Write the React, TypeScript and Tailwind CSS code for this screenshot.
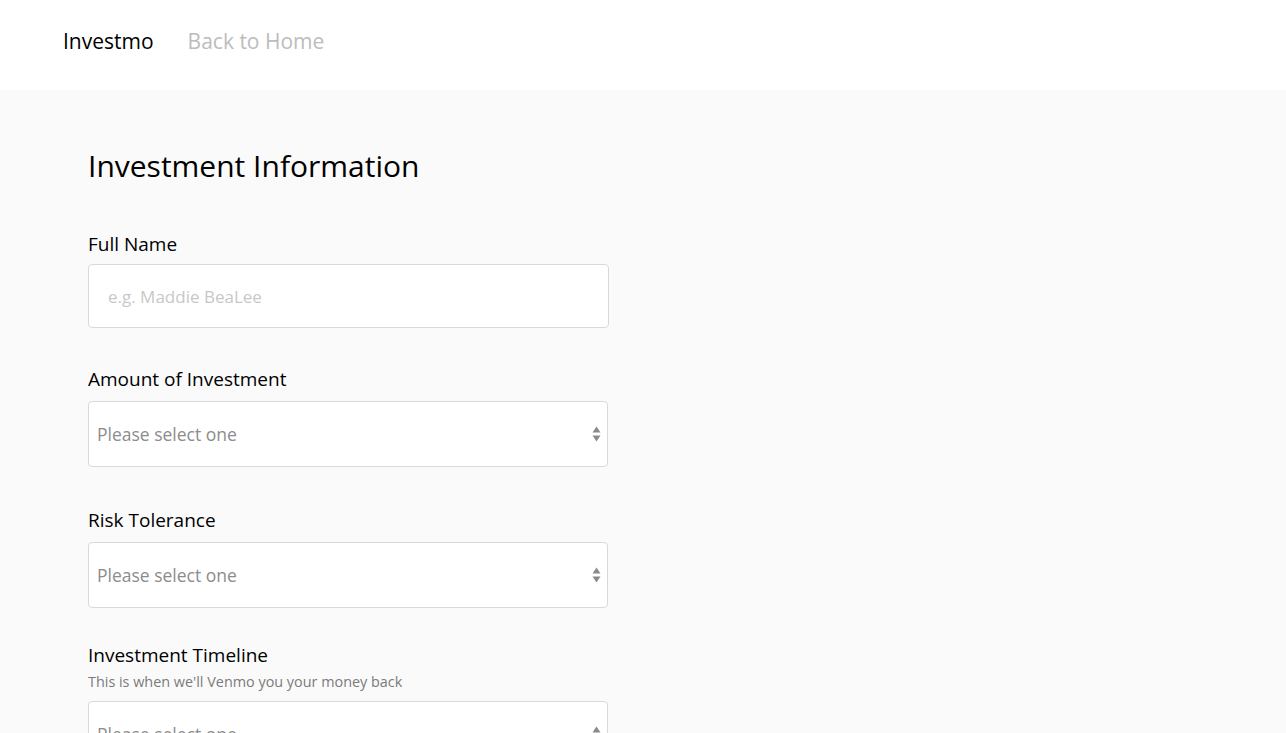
import React from "react";

const font = { fontFamily: '"Open Sans", "Noto Sans", sans-serif' };

function Arrows() {
  return (
    <svg width="9" height="18" viewBox="0 0 9 18" className="absolute right-[6px] top-1/2 -translate-y-1/2">
      <path d="M4.5 1.5 L8.5 7.5 L0.5 7.5 Z" fill="#8a8a8a" />
      <path d="M4.5 16.5 L8.5 10.5 L0.5 10.5 Z" fill="#8a8a8a" />
    </svg>
  );
}

function SelectBox() {
  return (
    <div className="relative mt-[9px] h-[66px] w-[520px] rounded-[4px] border border-[#d9d9d9] bg-white flex items-center">
      <span className="pl-[8px] text-[17.5px] text-[#8c8c8c]">Please select one</span>
      <Arrows />
    </div>
  );
}

export default function App() {
  return (
    <div className="min-h-screen bg-[#fafafa]" style={font}>
      <header className="h-[90px] bg-white flex items-center px-[63px] gap-[34px] pb-[6px]">
        <span className="text-[21px] text-black">Investmo</span>
        <span className="text-[21px] text-[#bcbcbc]">Back to Home</span>
      </header>
      <main className="pl-[88px] pt-[56px] pb-[40px]">
        <h1 className="text-[30px] leading-[40px] text-black">Investment Information</h1>

        <div className="mt-[45px] flex flex-col">
          <label className="text-[19px] leading-[26px] text-black">Full Name</label>
          <input
            className="mt-[7px] h-[64px] w-[521px] rounded-[4px] border border-[#d9d9d9] bg-white pl-[19px] text-[17px] outline-none placeholder:text-[#c8c8c8]"
            placeholder="e.g. Maddie BeaLee"
          />
        </div>

        <div className="mt-[38px] flex flex-col">
          <label className="text-[19px] leading-[26px] text-black">Amount of Investment</label>
          <SelectBox />
        </div>

        <div className="mt-[40px] flex flex-col">
          <label className="text-[19px] leading-[26px] text-black">Risk Tolerance</label>
          <SelectBox />
        </div>

        <div className="mt-[34px] flex flex-col">
          <label className="text-[19px] leading-[26px] text-black">Investment Timeline</label>
          <p className="mt-[4px] text-[14.4px] leading-[20px] text-[#7a7a7a]">This is when we'll Venmo you your money back</p>
          <SelectBox />
        </div>
      </main>
    </div>
  );
}
